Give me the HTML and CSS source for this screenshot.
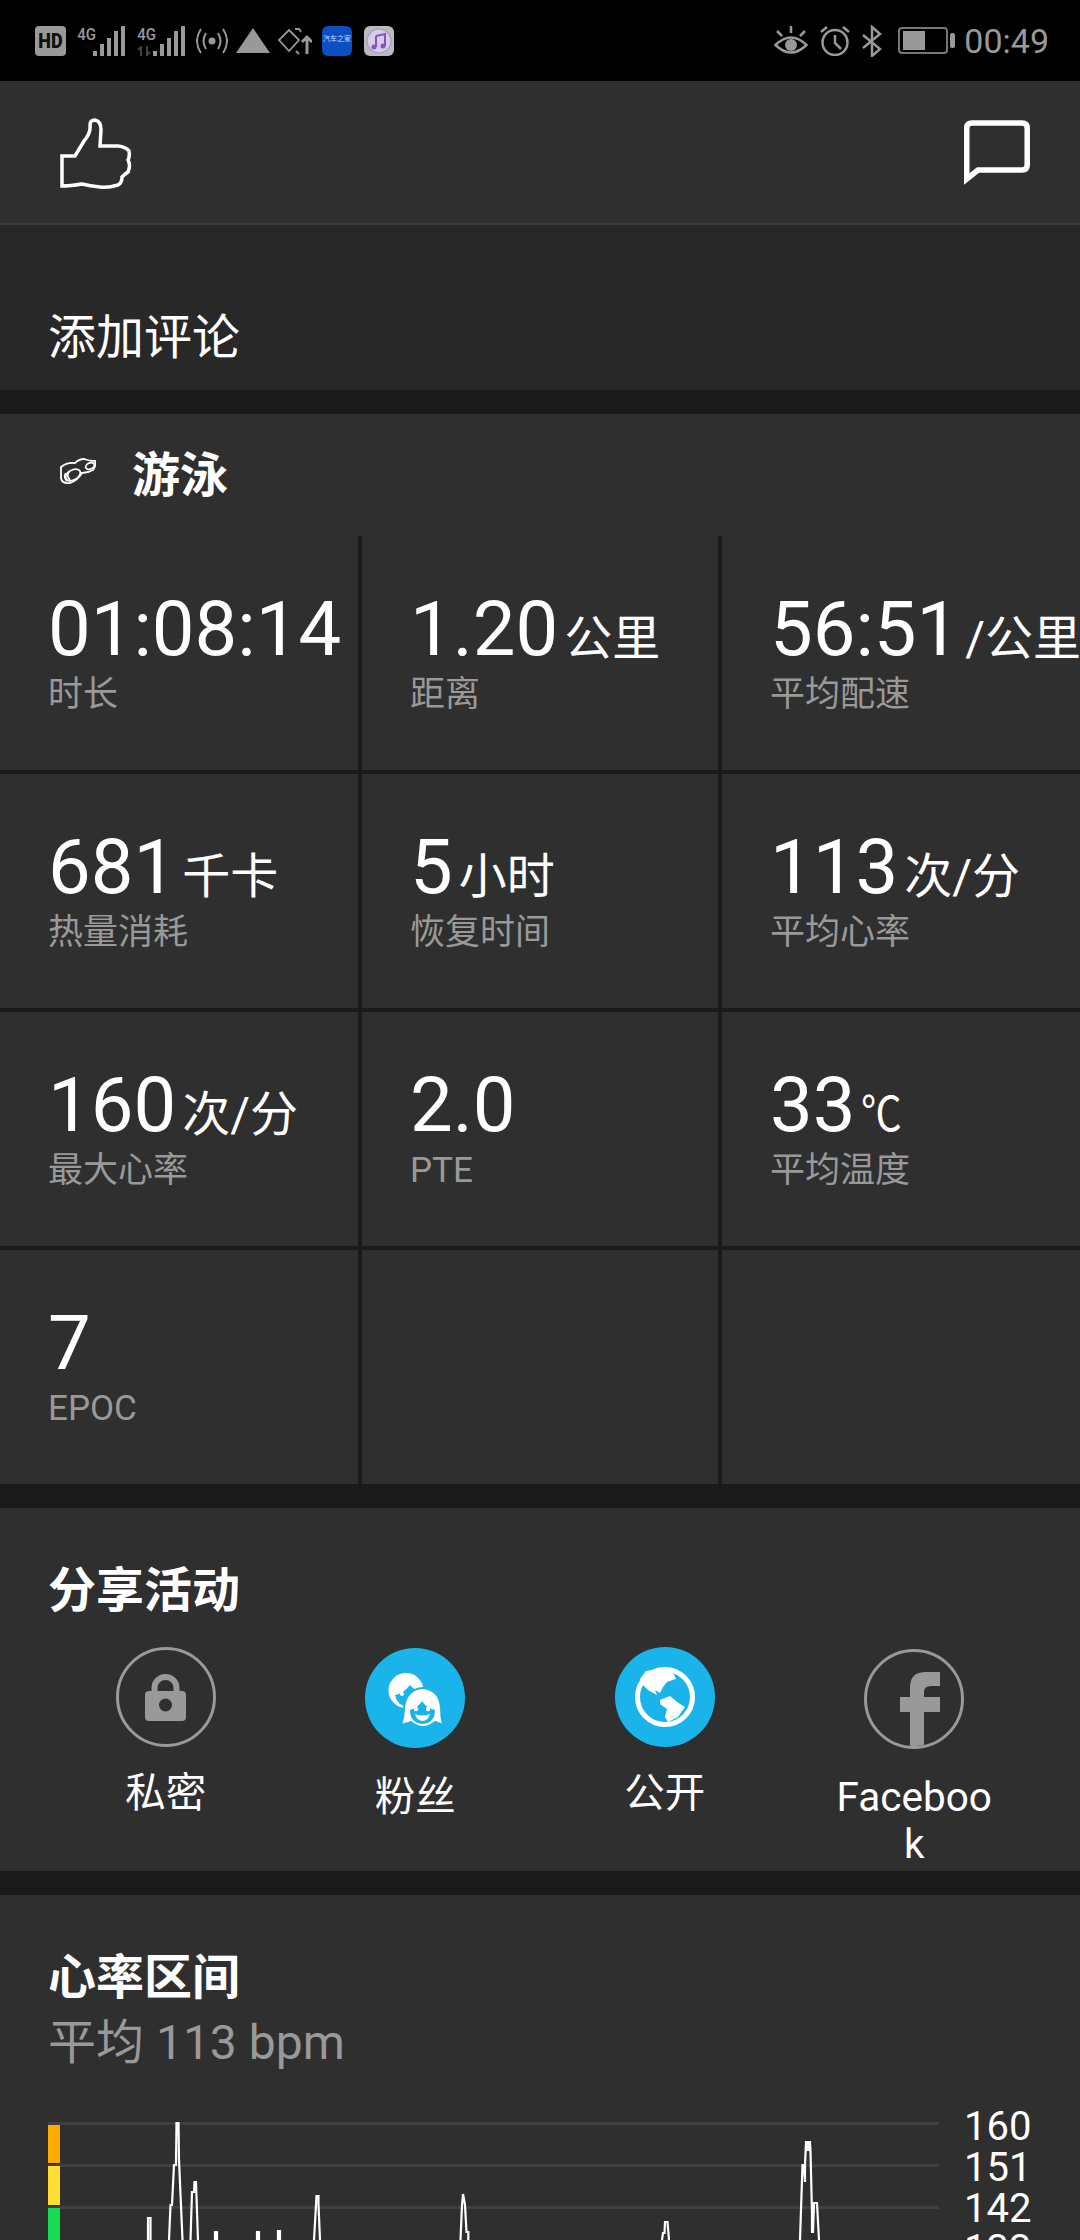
FILE: index.html
```html
<!DOCTYPE html>
<html>
<head>
    <meta charset="utf-8" />
    <title>游泳</title>
    <link rel="stylesheet" href="styles.css">
</head>
<body>
    <header class="status">
        <div class="status-left">
            <div class="hd"><span>HD</span></div>
            <div class="net">
                <span class="net-label">4G</span>
                <svg width="33" height="30" viewBox="0 0 33 30" fill="#999"><rect x="0" y="25" width="4" height="5"/><rect x="7" y="18" width="4" height="12"/><rect x="14" y="12" width="4" height="18"/><rect x="21" y="5" width="4" height="25"/><rect x="28" y="0" width="4" height="30"/></svg>
            </div>
            <div class="net">
                <span class="net-label">4G</span>
                <svg class="net-arrows" width="15" height="10" viewBox="0 0 15 10" fill="none" stroke="#444" stroke-width="2"><path d="M4 10V1L1 4M10 0v9l3-3"/></svg>
                <svg width="33" height="30" viewBox="0 0 33 30" fill="#999"><rect x="0" y="25" width="4" height="5"/><rect x="7" y="18" width="4" height="12"/><rect x="14" y="12" width="4" height="18"/><rect x="21" y="5" width="4" height="25"/><rect x="28" y="0" width="4" height="30"/></svg>
            </div>
            <svg width="32" height="26" viewBox="0 0 32 26" fill="none" stroke="#999" stroke-width="2"><circle cx="16" cy="13" r="3.500" fill="#999" stroke="none"/><path d="M10 5q-5 8 0 16M22 5q5 8 0 16M5 1q-8 12 0 24M27 1q8 12 0 24"/></svg>
            <svg class="signal-off" width="34" height="25" viewBox="0 0 34 25"><path d="M17 0L34 25H0z" fill="#999"/></svg>
            <svg class="wifi-off" width="34" height="28" viewBox="0 0 34 28" fill="none" stroke="#999" stroke-width="1.800"><path d="M11 3l10 10-10 11L1 13zM17 2h4l2 3M18 24l3 3"/><path d="M29 27V11M24 15l5-5 5 5" stroke-width="3"/></svg>
            <div class="app-auto">汽车之家</div>
            <div class="app-music">
                <svg width="30" height="30" viewBox="0 0 30 30"><circle cx="15" cy="15" r="12" fill="#d5cfe4" stroke="#a89ed6" stroke-width="1.500"/><path d="M12 10l9-2v12M12 10v11" stroke="#8a4fc7" stroke-width="2" fill="none"/><circle cx="10" cy="21" r="2.500" fill="#8a4fc7"/><circle cx="19" cy="20" r="2.500" fill="#8a4fc7"/></svg>
            </div>
        </div>
        <div class="status-right">
            <svg width="34" height="30" viewBox="0 0 34 30" fill="none" stroke="#999" stroke-width="2.500"><path d="M1.500 19q15.500-15 31 0q-15.500 15-31 0z"/><circle cx="17" cy="19" r="6" fill="#999" stroke="none"/><path d="M17 0v7M3 5l5 5M31 5l-5 5"/></svg>
            <svg width="30" height="31" viewBox="0 0 30 31" fill="none" stroke="#999" stroke-width="2.500"><circle cx="15" cy="17.500" r="12.500"/><path d="M15 10v8l6 6M1 7l6-5M29 7l-6-5"/></svg>
            <svg width="20" height="32" viewBox="0 0 20 32" fill="none" stroke="#999" stroke-width="2.500"><path d="M1 10l17 14-8 7V2l8 7L1 23"/></svg>
            <div class="battery"><div class="battery-body"><div class="battery-fill"></div></div><div class="battery-tip"></div></div>
            <span class="clock">00:49</span>
        </div>
    </header>

    <section class="topbar">
        <svg width="72" height="71" viewBox="0 0 72 71" fill="none" stroke="#fff" stroke-width="3.500"><path d="M2 68V38H15L24 23Q31 15 30 7Q30 2 35 2Q41 3 41 12L40 28H58Q66 29 69 33Q70 38 68 42Q71 47 68 54Q65 56 62 59Q62 65 58 67Q48 70 40 69Q30 68 22 66Q10 68 2 68Z"/></svg>
        <svg class="comment-icon" width="66" height="66" viewBox="0 0 66 66" fill="none" stroke="#fff" stroke-width="5.500"><path d="M2.750 59V8Q2.750 3 8 3H58Q63.200 3 63.200 8V45Q63.200 50 58 50H14Z"/></svg>
    </section>

    <div class="comment-row">添加评论</div>

    <section class="card activity">
        <div class="sport">
            <svg width="36" height="26" viewBox="0 0 36 26" fill="none" stroke="#fff" stroke-width="1.800"><path d="M1 9Q7 4 15 5Q19 1 24 1Q29 3 35 3Q36 9 33 12Q28 15 22 15Q17 23 10 25Q2 26 1 20Z"/><ellipse cx="30" cy="8" rx="4.500" ry="3" transform="rotate(-25 30 8)"/><ellipse cx="13" cy="17" rx="8" ry="5" transform="rotate(-30 13 17)"/><path d="M6 15Q3 19 7 23M9 13Q6 18 10 22"/></svg>
            <h2 class="sport-name">游泳</h2>
        </div>
        <div class="stats">
            <div class="stat"><div class="stat-value">01:08:14</div><div class="stat-label">时长</div></div>
            <div class="stat"><div class="stat-value">1.20<span class="unit">公里</span></div><div class="stat-label">距离</div></div>
            <div class="stat"><div class="stat-value">56:51<span class="unit">/公里</span></div><div class="stat-label">平均配速</div></div>
            <div class="stat"><div class="stat-value">681<span class="unit">千卡</span></div><div class="stat-label">热量消耗</div></div>
            <div class="stat"><div class="stat-value">5<span class="unit">小时</span></div><div class="stat-label">恢复时间</div></div>
            <div class="stat"><div class="stat-value">113<span class="unit">次/分</span></div><div class="stat-label">平均心率</div></div>
            <div class="stat"><div class="stat-value">160<span class="unit">次/分</span></div><div class="stat-label">最大心率</div></div>
            <div class="stat"><div class="stat-value">2.0</div><div class="stat-label">PTE</div></div>
            <div class="stat"><div class="stat-value">33<span class="unit unit-temp">℃</span></div><div class="stat-label">平均温度</div></div>
            <div class="stat"><div class="stat-value">7</div><div class="stat-label">EPOC</div></div>
            <div class="stat"></div>
            <div class="stat"></div>
        </div>
    </section>

    <section class="card share">
        <h2 class="card-title">分享活动</h2>
        <div class="share-row">
            <div class="share-item">
                <div class="share-icon outline">
                    <svg width="41" height="47" viewBox="0 0 41 47"><path d="M9.500 18V14a11 11 0 0 1 22 0V18" fill="none" stroke="#999" stroke-width="6"/><rect x="0" y="17" width="41" height="30" rx="4" fill="#999"/><circle cx="20.500" cy="31" r="6.500" fill="#2f2f2f"/></svg>
                </div>
                <div class="share-name">私密</div>
            </div>
            <div class="share-item item-fans">
                <div class="share-icon filled">
                    <svg width="100" height="100" viewBox="0 0 100 100">
                        <circle cx="41" cy="42.500" r="17.500" fill="#fff"/>
                        <path d="M30 47Q38 46 45 37Q48 41 54 43Q46 50 44 59Q32 58 30 47Z" fill="#1ab4ea"/>
                        <circle cx="37" cy="46" r="2" fill="#fff"/>
                        <path d="M58 40Q41 41 39 60Q39 69 36 77L46 74Q52 79 58 79T70 74L78 77Q76 69 76 60Q75 42 58 40Z" fill="#fff" stroke="#1ab4ea" stroke-width="2"/>
                        <path d="M45 62Q53 60 57 53Q61 60 70 62Q70 75 57.500 76Q45 75 45 62Z" fill="#1ab4ea"/>
                        <circle cx="51" cy="61" r="2.200" fill="#fff"/>
                        <circle cx="63" cy="61" r="2.200" fill="#fff"/>
                        <path d="M50 66Q57.500 69 65 66Q63 73 57.500 73T50 66Z" fill="#fff"/>
                    </svg>
                </div>
                <div class="share-name">粉丝</div>
            </div>
            <div class="share-item">
                <div class="share-icon filled">
                    <svg width="100" height="100" viewBox="0 0 100 100">
                        <circle cx="50" cy="50" r="27.500" fill="none" stroke="#fff" stroke-width="5"/>
                        <path d="M25 32L31 24Q44 21 57 23L61 32L52 35L48 40L45 46L40 43L42 48L33 43L27 37Z" fill="#fff"/>
                        <path d="M45 53L55 49L62 55L70 60L63 70L53 75L50 70L52 62L45 57Z" fill="#fff"/>
                    </svg>
                </div>
                <div class="share-name">公开</div>
            </div>
            <div class="share-item item-fb">
                <div class="share-icon outline fb-circle">
                    <svg width="40" height="74" viewBox="0 0 40 74"><path d="M10 74V40H0V25H10V15Q10 0 26 0H40V14H31Q24 14 24 20V25H40V40H24V74Z" fill="#999"/></svg>
                </div>
                <div class="share-name">Faceboo<br>k</div>
            </div>
        </div>
    </section>

    <section class="card heart">
        <h2 class="card-title">心率区间</h2>
        <div class="heart-avg">平均 113 bpm</div>
        <div class="chart">
            <div class="plot">
                <div class="gridline"></div>
                <div class="gridline"></div>
                <div class="gridline"></div>
                <div class="zones">
                    <div class="zone zone-orange"></div>
                    <div class="zone zone-yellow"></div>
                    <div class="zone zone-green"></div>
                </div>
                <svg class="trace" width="891" height="118" viewBox="48 2122 891 118" fill="none" stroke="#fff" stroke-width="2.200">
                    <path d="M148 2240V2218H150.500V2240"/>
                    <path d="M169 2240L170.500 2205H172L174 2165H176L176.500 2123H178.500L179 2160L182.500 2240"/>
                    <path d="M190.500 2240L192 2192H194L194.500 2182H196L198 2240"/>
                    <path d="M215 2240V2232H217V2240M257 2240V2232H259V2240M278 2240V2231H280V2240"/>
                    <path d="M314 2240L316 2205L316.500 2196H318.500V2205L320 2240"/>
                    <path d="M460.500 2240L462 2205L463 2194L465 2205L466.500 2232H468.300V2240"/>
                    <path d="M662 2240L663 2233H664.500L665 2222H667.500L669 2240"/>
                    <path d="M800 2240L802.500 2165H804L805 2182V2165L806 2142H810L810.500 2152L812 2213V2232H813L814 2203H817L819 2240"/>
                    <path d="M807 2143H809.500V2150H807Z" fill="#fff"/>
                </svg>
            </div>
            <div class="axis">
                <div class="tick">160</div>
                <div class="tick">151</div>
                <div class="tick">142</div>
                <div class="tick">133</div>
            </div>
        </div>
    </section>
</body>
</html>
```

FILE: styles.css
```css
* {
    box-sizing: border-box;
}

html, body {
    margin: 0;
    padding: 0;
}

html {
    font-family: Roboto, "Noto Sans CJK SC", sans-serif;
    color: #fff;
}

body {
    width: 1080px;
    height: 2240px;
    overflow: hidden;
    background: #1a1a1a;
}

svg {
    display: block;
    flex: none;
}

.status {
    height: 81px;
    background: #000;
    display: flex;
    align-items: center;
    justify-content: space-between;
    padding: 0 31px 0 35px;
}

.status-left, .status-right {
    display: flex;
    align-items: center;
    gap: 10px;
}

.status-right {
    gap: 12px;
}

.hd {
    width: 31px;
    height: 30px;
    border-radius: 4px;
    background: #999;
    color: #111;
    font-size: 20px;
    font-weight: 900;
    line-height: 30px;
    text-align: center;
    overflow: hidden;
}

.hd span {
    display: inline-block;
    transform: scaleX(0.9);
}

.net {
    position: relative;
    width: 50px;
    height: 30px;
    display: flex;
    justify-content: flex-end;
}

.net-label {
    position: absolute;
    top: -3px;
    left: -2px;
    font-size: 20px;
    line-height: 22px;
    font-weight: 500;
    color: #999;
    transform: scale(0.75, 0.8);
}

.net-arrows {
    position: absolute;
    left: 1px;
    bottom: 0;
}

.signal-off {
    margin-left: -2px;
}

.wifi-off {
    margin-left: -2px;
}

.app-auto {
    width: 30px;
    height: 30px;
    border-radius: 6px;
    background: #0a50c0;
    color: #c8d8ff;
    font-size: 7px;
    line-height: 26px;
    text-align: center;
    white-space: nowrap;
    overflow: hidden;
}

.app-music {
    width: 30px;
    height: 30px;
    margin-left: 2px;
    border-radius: 6px;
    background: #bbb;
}

.battery {
    display: flex;
    align-items: center;
    gap: 2px;
    margin-left: 4px;
}

.battery-body {
    width: 50px;
    height: 27px;
    border: 2px solid #777;
    border-radius: 4px;
    padding: 2px 3px;
}

.battery-fill {
    width: 22px;
    height: 100%;
    background: #999;
}

.battery-tip {
    width: 5px;
    height: 15px;
    background: #999;
    border-radius: 2px;
}

.clock {
    font-size: 34px;
    color: #999;
    margin-left: -3px;
}

.topbar {
    height: 144px;
    background: #2f2f2f;
    border-bottom: 2px solid #3d3d3d;
    display: flex;
    justify-content: space-between;
    align-items: flex-start;
    padding: 37px 50px 0 60px;
}

.comment-icon {
    margin-top: 2px;
}

.comment-row {
    height: 165px;
    background: #282828;
    padding-top: 84px;
    padding-left: 48px;
    font-size: 48px;
    line-height: 58px;
}

.card {
    background: #2f2f2f;
}

.activity {
    margin-top: 24px;
}

.sport {
    height: 122px;
    display: flex;
    align-items: center;
    gap: 36px;
    padding: 0 0 8px 60px;
}

.sport-name {
    margin: 0;
    font-size: 48px;
    font-weight: 700;
}

.stats {
    display: grid;
    grid-template-columns: 362px 360px 358px;
    grid-template-rows: 238px 238px 238px 234px;
}

.stat {
    padding: 53px 0 0 48px;
    border-right: 4px solid #1a1a1a;
    border-bottom: 4px solid #1a1a1a;
    white-space: nowrap;
    overflow: hidden;
}

.stat:nth-child(3n) {
    border-right: 0;
}

.stat:nth-child(n+10) {
    border-bottom: 0;
}

.stat-value {
    height: 80px;
    font-size: 76px;
    line-height: 80px;
}

.unit {
    font-size: 48px;
    line-height: 1;
    margin-left: 6px;
}

.unit-temp {
    display: inline-block;
    transform: scaleX(0.85);
    transform-origin: left;
}

.stat-label {
    margin-top: 5px;
    font-size: 35px;
    line-height: 42px;
    color: #999;
}

.share {
    margin-top: 24px;
    height: 363px;
    padding-top: 54px;
}

.card-title {
    margin: 0;
    padding-left: 48px;
    font-size: 48px;
    line-height: 58px;
    font-weight: 700;
}

.share-row {
    display: grid;
    grid-template-columns: repeat(4, 249.5px);
    padding: 27px 0 0 41px;
}

.share-item {
    display: flex;
    flex-direction: column;
    align-items: center;
}

.share-icon {
    width: 100px;
    height: 100px;
    border-radius: 50%;
    display: flex;
    align-items: center;
    justify-content: center;
}

.outline {
    border: 3px solid #999;
}

.filled {
    background: #1ab4ea;
}

.fb-circle {
    align-items: flex-end;
    overflow: hidden;
}

.fb-circle svg {
    margin-left: 12px;
}

.share-name {
    margin-top: 23px;
    font-size: 40.500px;
    line-height: 47px;
    text-align: center;
}

.item-fans {
    padding-top: 1px;
}

.item-fans .share-name {
    margin-top: 26px;
}

.item-fb {
    padding-top: 2px;
}

.item-fb .share-name {
    margin-top: 25px;
}

.heart {
    margin-top: 24px;
    height: 345px;
    padding-top: 54px;
}

.heart-avg {
    padding-left: 48px;
    margin-top: 7px;
    font-size: 48px;
    line-height: 58px;
    color: #999;
}

.chart {
    margin: 50px 0 0 48px;
    display: flex;
}

.plot {
    position: relative;
    width: 891px;
    height: 118px;
    flex: none;
    overflow: hidden;
}

.gridline {
    height: 3px;
    margin-bottom: 39px;
    background: #404040;
}

.zones {
    position: absolute;
    top: 3px;
    left: 0;
    width: 12px;
    display: flex;
    flex-direction: column;
    gap: 3px;
}

.zone-orange { height: 38px; background: #ffaa00; }
.zone-yellow { height: 39px; background: #ffdd33; }
.zone-green { height: 50px; background: #14dc55; }

.trace {
    position: absolute;
    top: 0;
    left: 0;
}

.axis {
    margin: -16px 0 0 25px;
}

.tick {
    font-size: 40px;
    line-height: 41px;
}
```
